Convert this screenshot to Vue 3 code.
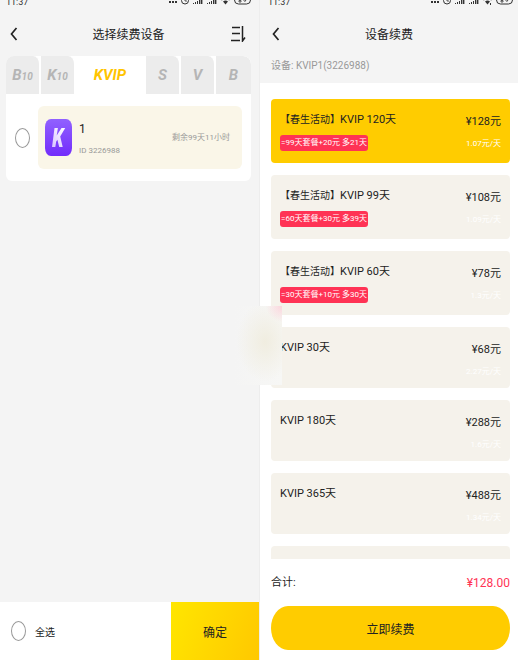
<script setup>
import { ref, computed } from 'vue'

const tabs = [
  { name: 'B', sub: '10' },
  { name: 'K', sub: '10' },
  { name: 'KVIP', sub: '' },
  { name: 'S', sub: '' },
  { name: 'V', sub: '' },
  { name: 'B', sub: '' },
]
const activeTab = ref(2)
const picked = ref(false)
const all = ref(false)

const plans = [
  { promo: true, name: 'KVIP 120天', tag: '=99天套餐+20元 多21天', price: 128, rate: '1.07' },
  { promo: true, name: 'KVIP 99天', tag: '=60天套餐+30元 多39天', price: 108, rate: '1.09' },
  { promo: true, name: 'KVIP 60天', tag: '=30天套餐+10元 多30天', price: 78, rate: '1.3' },
  { promo: false, name: 'KVIP 30天', price: 68, rate: '2.27' },
  { promo: false, name: 'KVIP 180天', price: 288, rate: '1.6' },
  { promo: false, name: 'KVIP 365天', price: 488, rate: '1.34' },
]
const selected = ref(0)
const total = computed(() => plans[selected.value].price.toFixed(2))
</script>

<template>
  <main class="screens">
    <section class="phone">
      <div class="status">
        <span class="time">11:37</span>
        <svg class="status-icons" viewBox="0 0 84 8" aria-hidden="true">
          <g fill="#333">
            <rect x="1" y="1" width="2" height="2" /><rect x="4" y="1" width="2" height="2" /><rect x="7" y="1" width="2" height="2" />
            <path d="M25 3h1v1h-1zM27 2h1v2h-1zM29 1h1v3h-1zM31 0h1.4v4H31zM33 0h1.4v4H33zM39 3h1v1h-1zM41 2h1v2h-1zM43 1h1v3h-1zM45 0h1.4v4H45zM47 0h1.4v4H47z" />
            <path d="M55 1.5q2.5-2 5 0L57.5 4.5z" />
          </g>
          <g fill="none" stroke="#333">
            <circle cx="17" cy="0.5" r="3.5" /><path d="M17-1v2h2" stroke-width=".8" />
            <path d="M53.5 0q4-3 8 0" stroke-width=".8" />
            <rect x="66.5" y="-4" width="16" height="8" rx="4" />
          </g>
          <path d="M71 0.5h2v1.5h-2zM75 0h3l-1.5 2" fill="none" stroke="#333" stroke-width=".8" />
        </svg>
      </div>
      <header class="bar">
        <button class="icon-btn" aria-label="返回">
          <svg width="8" height="14" viewBox="0 0 8 14"><path d="M6.5 1L1.5 7l5 6" fill="none" stroke="#222" stroke-width="1.7" /></svg>
        </button>
        <h1>选择续费设备</h1>
        <button class="icon-btn" aria-label="排序">
          <svg width="15" height="16" viewBox="0 0 15 16"><path d="M1 1.5h8M1 7.5h8M0 14.5h9M11.5 0v15l2.5-3.5" fill="none" stroke="#222" stroke-width="1.5" /></svg>
        </button>
      </header>

      <div class="device-area">
        <nav class="tabs">
          <button v-for="(t, i) in tabs" :key="i" class="tab" :class="{ active: i === activeTab }" @click="activeTab = i">
            {{ t.name }}<small v-if="t.sub">{{ t.sub }}</small>
          </button>
        </nav>
        <div class="device-panel">
          <label class="device-row">
            <input v-model="picked" type="checkbox" class="round" />
            <span class="device">
              <svg class="logo" width="27" height="37" viewBox="0 0 27 37" aria-hidden="true">
                <defs>
                  <linearGradient id="logoBg" x1="0" y1="0" x2="0" y2="1"><stop offset="0" stop-color="#9161ff" /><stop offset="1" stop-color="#722cfb" /></linearGradient>
                  <linearGradient id="logoK" x1="1" y1="0" x2="0" y2="1"><stop offset="0" stop-color="#fff" /><stop offset="1" stop-color="#d9c6ff" /></linearGradient>
                </defs>
                <rect width="27" height="37" rx="6" ry="8" fill="url(#logoBg)" />
                <path d="M9.5 9h3.400l-1.200 7.500L16.500 9h3.700l-5 8.600L17.700 28h-3.500l-1.800-7.200-1.200 1.800-.9 5.400H7z" fill="url(#logoK)" />
              </svg>
              <span class="device-text">
                <span class="device-name">1</span>
                <span class="device-id">ID 3226988</span>
              </span>
              <span class="remain">剩余99天11小时</span>
            </span>
          </label>
        </div>
      </div>

      <footer class="select-bar">
        <label class="select-all">
          <input v-model="all" type="checkbox" class="round" />
          <span>全选</span>
        </label>
        <button class="confirm">确定</button>
      </footer>
    </section>

    <section class="phone renew">
      <div class="status">
        <span class="time">11:37</span>
        <svg class="status-icons" viewBox="0 0 84 8" aria-hidden="true">
          <g fill="#333">
            <rect x="1" y="1" width="2" height="2" /><rect x="4" y="1" width="2" height="2" /><rect x="7" y="1" width="2" height="2" />
            <path d="M25 3h1v1h-1zM27 2h1v2h-1zM29 1h1v3h-1zM31 0h1.4v4H31zM33 0h1.4v4H33zM39 3h1v1h-1zM41 2h1v2h-1zM43 1h1v3h-1zM45 0h1.4v4H45zM47 0h1.4v4H47z" />
            <path d="M55 1.5q2.5-2 5 0L57.5 4.5zM60 3h1v2h-1z" />
          </g>
          <g fill="none" stroke="#333">
            <circle cx="17" cy="0.5" r="3.5" /><path d="M17-1v2h2" stroke-width=".8" />
            <path d="M53.5 0q4-3 8 0" stroke-width=".8" />
            <rect x="66.5" y="-4" width="16" height="8" rx="4" />
          </g>
          <path d="M71 0.5h2v1.5h-2zM75 0h3l-1.5 2" fill="none" stroke="#333" stroke-width=".8" />
        </svg>
      </div>
      <header class="bar">
        <button class="icon-btn" aria-label="返回">
          <svg width="8" height="14" viewBox="0 0 8 14"><path d="M6.5 1L1.5 7l5 6" fill="none" stroke="#222" stroke-width="1.7" /></svg>
        </button>
        <h1>设备续费</h1>
        <span></span>
      </header>
      <p class="current">设备: KVIP1(3226988)</p>

      <div class="plans">
        <button v-for="(p, i) in plans" :key="p.name" class="plan" :class="{ chosen: i === selected, promo: p.promo }" @click="selected = i">
          <span class="plan-main">
            <span class="plan-name"><span v-if="p.promo" class="campaign">【春生活动】</span>{{ p.name }}</span>
            <span v-if="p.tag" class="tag">{{ p.tag }}</span>
          </span>
          <span class="plan-cost">
            <span class="price">¥{{ p.price }}元</span>
            <span class="rate">{{ p.rate }}元/天</span>
          </span>
        </button>
        <div class="plan"></div>
      </div>

      <footer class="checkout">
        <div class="total">
          <span>合计:</span>
          <strong>¥{{ total }}</strong>
        </div>
        <button class="pay">立即续费</button>
      </footer>
      <div class="haze" aria-hidden="true"></div>
    </section>
  </main>
</template>

<style>
body {
  margin: 0;
  background: #fff;
}
</style>

<style scoped>
.screens {
  display: grid;
  grid-template-columns: 1fr 1fr;
  height: 100vh;
  box-sizing: border-box;
  padding-bottom: 3px;
  font-family: Roboto, "Noto Sans CJK SC", sans-serif;
  font-size: 12px;
  color: #222;
}
button {
  font: inherit;
  color: inherit;
  border: 0;
  padding: 0;
  background: none;
  cursor: pointer;
}
.phone {
  display: flex;
  flex-direction: column;
  min-width: 0;
  min-height: 0;
  background: #f4f4f4;
}
.renew {
  position: relative;
  border-left: 1px solid #ededed;
}
.status {
  flex: none;
  display: flex;
  justify-content: space-between;
  align-items: flex-end;
  height: 8px;
  padding: 0 7px 0 6px;
  overflow: hidden;
}
.renew .status {
  padding: 0 4px 0 8px;
}
.time {
  font-size: 9px;
  line-height: 12px;
  color: #333;
}
.status-icons {
  width: 84px;
  height: 8px;
}
.bar {
  flex: none;
  display: grid;
  grid-template-columns: 16px 1fr 16px;
  align-items: center;
  height: 48px;
  padding: 4px 12px 0 10px;
  box-sizing: border-box;
}
.renew .bar {
  padding: 4px 12px 0;
}
.bar h1 {
  margin: 0;
  padding-top: 2px;
  font-size: 12px;
  line-height: 20px;
  font-weight: 400;
  text-align: center;
}
.icon-btn {
  display: flex;
}
.device-area {
  flex: 1;
  padding: 0 8px 0 6px;
}
.tabs {
  display: grid;
  grid-template-columns: 1fr 1fr 2fr 1fr 1fr 1fr;
  border-radius: 8px 8px 0 0;
  overflow: hidden;
  background: #fff;
}
.tab {
  height: 38px;
  font-size: 15px;
  font-weight: 700;
  font-style: italic;
  color: #b5b5b5;
  background: #ececec;
  border-right: 2px solid #fff;
  border-radius: 0 8px 0 0;
}
.tab:last-child {
  border-right: 0;
}
.tab small {
  font-size: 10px;
}
.tab.active {
  font-size: 15px;
  color: #ffc400;
  background: #fff;
}
.device-panel {
  padding: 12px 9px;
  background: #fff;
  border-radius: 0 0 6px 6px;
}
.device-row {
  display: flex;
  align-items: center;
  gap: 8px;
}
.round {
  flex: none;
  appearance: none;
  width: 15px;
  height: 20px;
  margin: 0;
  border: 1px solid #999;
  border-radius: 50%;
  background: #fff;
}
.round:checked {
  background: #ffcc00;
}
.device {
  flex: 1;
  display: flex;
  align-items: center;
  gap: 7px;
  height: 63px;
  padding: 0 12px 0 7px;
  background: #faf6e8;
  border-radius: 6px;
}
.device-text {
  flex: 1;
  display: flex;
  flex-direction: column;
  gap: 8px;
  padding-top: 2px;
}
.device-name {
  font-size: 12px;
  line-height: 16px;
}
.device-id,
.remain {
  font-size: 8px;
  line-height: 12px;
  color: #999;
}
.select-bar {
  flex: none;
  display: flex;
  height: 58px;
  background: #fff;
}
.select-all {
  flex: 1;
  display: flex;
  align-items: center;
  gap: 9px;
  padding-left: 11px;
  font-size: 10px;
}
.confirm {
  width: 34%;
  background: linear-gradient(110deg, #ffe600, #ffc800);
}
.current {
  flex: none;
  margin: 0;
  padding: 0 11px 8px;
  font-size: 10px;
  line-height: 19px;
  color: #999;
}
.plans {
  flex: 1;
  min-height: 0;
  overflow: hidden;
  display: flex;
  flex-direction: column;
  gap: 12px;
  padding: 16px 8px 0 11px;
  background: #fff;
}
.plan {
  flex: none;
  display: flex;
  justify-content: space-between;
  align-items: flex-start;
  height: 61px;
  padding: 13px 9px 0;
  box-sizing: border-box;
  background: #f5f2eb;
  border-radius: 4px;
  text-align: left;
}
.plan.promo {
  height: 64px;
}
.plan.chosen {
  background: #ffcc00;
}
.plan-main,
.plan-cost {
  display: flex;
  flex-direction: column;
}
.plan-main {
  align-items: flex-start;
  gap: 7px;
}
.plan-name,
.price {
  font-size: 11px;
  line-height: 16px;
}
.campaign {
  font-size: 10px;
}
.tag {
  padding: 0 1px;
  font-size: 8px;
  line-height: 16px;
  color: #fff;
  background: #ff3355;
  border-radius: 3px;
}
.plan-cost {
  align-items: flex-end;
  gap: 8px;
  padding-top: 2px;
}
.rate {
  font-size: 8px;
  line-height: 12px;
  color: #fff;
}
.checkout {
  flex: none;
  padding: 14px 8px 10px 11px;
  background: #fff;
}
.total {
  display: flex;
  justify-content: space-between;
  align-items: center;
  padding-bottom: 13px;
  font-size: 11px;
  line-height: 20px;
}
.total strong {
  font-size: 12px;
  font-weight: 400;
  color: #ff3355;
}
.pay {
  display: block;
  width: 100%;
  height: 44px;
  background: #ffcc00;
  border-radius: 17px / 22px;
}
.haze {
  position: absolute;
  left: -26px;
  top: 306px;
  width: 48px;
  height: 79px;
  background:
    radial-gradient(circle at 100% 0, #fbd5dc, rgba(251, 213, 220, 0) 16px),
    radial-gradient(ellipse at 65% 45%, #f0ede0, rgba(244, 242, 234, 0) 65%),
    linear-gradient(90deg, #f4f4f4, #f7f7f5);
}
</style>
